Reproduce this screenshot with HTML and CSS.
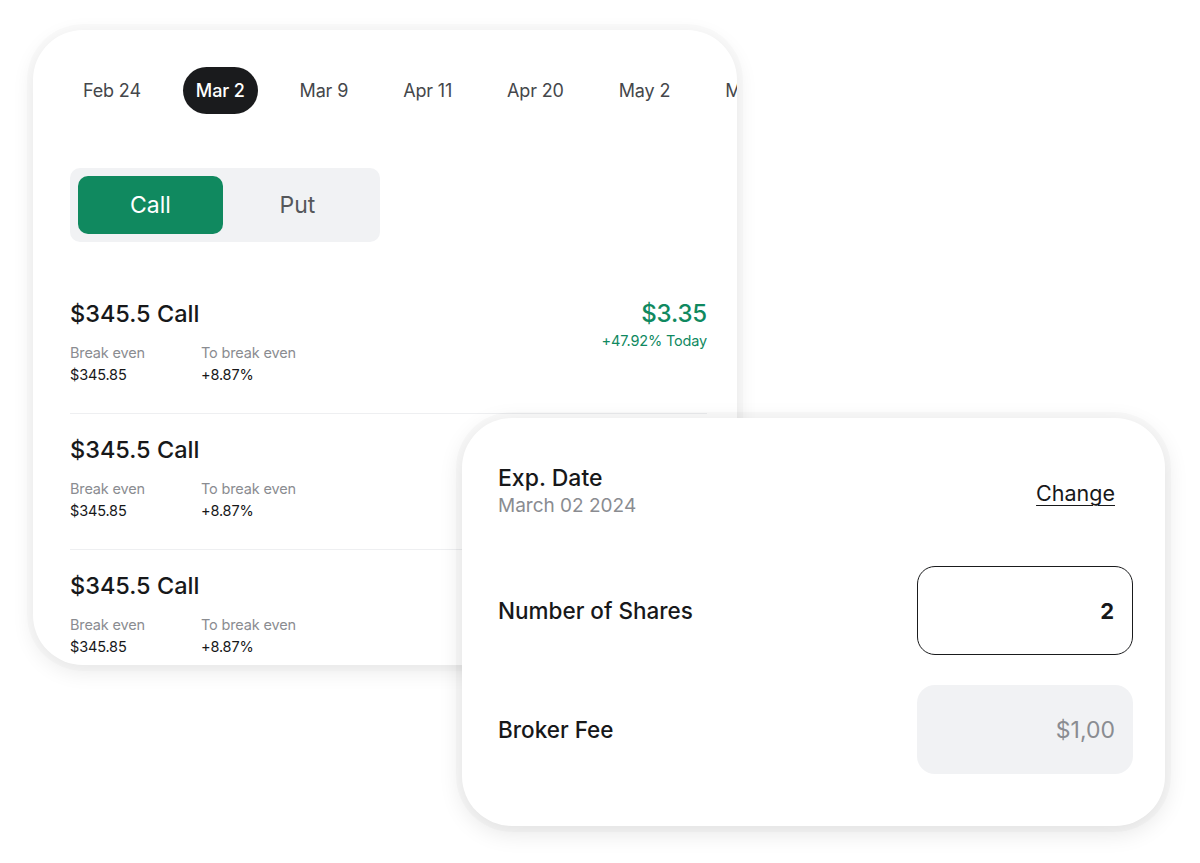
FILE: index.html
```html
<!DOCTYPE html>
<html lang="en">
<head>
  <meta charset="UTF-8" />
  <meta name="viewport" content="width=device-width, initial-scale=1.0" />
  <title>Options – Buy Call</title>
  <link rel="stylesheet" href="styles.css">
</head>
<body>

<main class="stage">

  <section class="card chain">
    <nav class="dates">
      <span class="date">Feb 24</span>
      <span class="date active">Mar 2</span>
      <span class="date">Mar 9</span>
      <span class="date">Apr 11</span>
      <span class="date">Apr 20</span>
      <span class="date">May 2</span>
      <span class="date">May 9</span>
    </nav>

    <div class="toggle">
      <button class="toggle-btn active">Call</button>
      <button class="toggle-btn">Put</button>
    </div>

    <div class="options">
      <div class="option">
        <div class="option-main">
          <h3>$345.5 Call</h3>
          <div class="stats">
            <div class="stat">
              <span class="stat-label">Break even</span>
              <span class="stat-value">$345.85</span>
            </div>
            <div class="stat">
              <span class="stat-label">To break even</span>
              <span class="stat-value">+8.87%</span>
            </div>
          </div>
        </div>
        <div class="option-price">
          <span class="price">$3.35</span>
          <span class="change">+47.92% Today</span>
        </div>
      </div>

      <div class="option">
        <div class="option-main">
          <h3>$345.5 Call</h3>
          <div class="stats">
            <div class="stat">
              <span class="stat-label">Break even</span>
              <span class="stat-value">$345.85</span>
            </div>
            <div class="stat">
              <span class="stat-label">To break even</span>
              <span class="stat-value">+8.87%</span>
            </div>
          </div>
        </div>
      </div>

      <div class="option">
        <div class="option-main">
          <h3>$345.5 Call</h3>
          <div class="stats">
            <div class="stat">
              <span class="stat-label">Break even</span>
              <span class="stat-value">$345.85</span>
            </div>
            <div class="stat">
              <span class="stat-label">To break even</span>
              <span class="stat-value">+8.87%</span>
            </div>
          </div>
        </div>
      </div>
    </div>
  </section>

  <section class="card order">
    <div class="order-head">
      <div>
        <h4>Exp. Date</h4>
        <p class="muted">March 02 2024</p>
      </div>
      <a href="#" class="link">Change</a>
    </div>

    <div class="order-row">
      <span class="order-label">Number of Shares</span>
      <div class="field">2</div>
    </div>

    <div class="order-row">
      <span class="order-label">Broker Fee</span>
      <div class="field readonly">$1,00</div>
    </div>
  </section>

</main>

</body>
</html>
```

FILE: styles.css
```css
:root {
  --bg: #ffffff;
  --card-bg: #ffffff;
  --accent: #10895f;
  --text-main: #17181a;
  --text-soft: #45474b;
  --text-muted: #8a8c91;
  --field-bg: #f1f2f4;
  --line: #eeeff1;
  --shadow: rgba(0, 0, 0, 0.09);
}

* {
  margin: 0;
  padding: 0;
  box-sizing: border-box;
}

body {
  font-family: Inter, 'Noto Sans', sans-serif;
  background: var(--bg);
  color: var(--text-main);
  letter-spacing: -0.01em;
}

a {
  color: inherit;
}

.stage {
  position: relative;
  width: 1200px;
  height: 863px;
  padding: 30px 0 0 33px;
}

.card {
  background: var(--card-bg);
  border-radius: 50px;
  box-shadow: 0 0 0 6px rgba(0, 0, 0, 0.015), 0 6px 22px var(--shadow);
  overflow: hidden;
}

/* option chain card */

.chain {
  width: 704px;
  height: 635px;
  padding: 37px 30px 0 37px;
}

.dates {
  display: flex;
  gap: 29px;
  white-space: nowrap;
}

.date {
  flex: none;
  height: 47px;
  padding: 0 13px;
  display: flex;
  align-items: center;
  font-size: 18px;
  color: var(--text-soft);
  border-radius: 24px;
}

.date.active {
  background: #1a1b1d;
  color: #fff;
  font-weight: 500;
}

.toggle {
  margin-top: 54px;
  width: 310px;
  padding: 8px;
  display: flex;
  background: var(--field-bg);
  border-radius: 10px;
}

.toggle-btn {
  flex: 1;
  height: 58px;
  border: none;
  background: transparent;
  font-family: inherit;
  font-size: 23px;
  color: #55575b;
  border-radius: 10px;
  cursor: pointer;
}

.toggle-btn.active {
  flex: none;
  width: 145px;
  background: var(--accent);
  color: #fff;
}

.options {
  margin-top: 36px;
}

.option {
  display: flex;
  justify-content: space-between;
  padding: 21px 0 27px;
  border-bottom: 1px solid var(--line);
}

.option h3 {
  font-size: 23.5px;
  font-weight: 500;
  line-height: 30px;
  letter-spacing: 0;
}

.stats {
  display: flex;
  margin-top: 13px;
}

.stat {
  width: 131px;
  display: flex;
  flex-direction: column;
  font-size: 14.5px;
  line-height: 22px;
}

.stat-label {
  color: var(--text-muted);
}

.stat-value {
  color: var(--text-main);
}

.option-price {
  display: flex;
  flex-direction: column;
  align-items: flex-end;
  color: var(--accent);
}

.price {
  font-size: 24px;
  font-weight: 500;
  line-height: 30px;
}

.change {
  font-size: 14.5px;
  line-height: 20px;
  margin-top: 2px;
}

/* order card, sits over the chain card */

.order {
  position: absolute;
  left: 462px;
  top: 418px;
  width: 703px;
  height: 408px;
  padding: 45px 32px 0 36px;
  letter-spacing: 0;
  box-shadow: 0 0 0 6px rgba(0, 0, 0, 0.02), 0 6px 24px rgba(0, 0, 0, 0.11);
}

.order-head {
  display: flex;
  justify-content: space-between;
  align-items: center;
}

.order-head h4 {
  font-size: 23px;
  font-weight: 500;
  line-height: 30px;
}

.muted {
  font-size: 19px;
  line-height: 26px;
  color: var(--text-muted);
}

.link {
  margin-right: 18px;
  margin-top: 4px;
  font-size: 21.5px;
  text-underline-offset: 4px;
  text-decoration-thickness: 1px;
}

.order-row {
  display: flex;
  justify-content: space-between;
  align-items: center;
  margin-top: 47px;
}

.order-row + .order-row {
  margin-top: 30px;
}

.order-label {
  font-size: 22.5px;
  font-weight: 500;
}

.field {
  width: 216px;
  height: 89px;
  padding: 0 18px;
  display: flex;
  align-items: center;
  justify-content: flex-end;
  font-size: 22px;
  font-weight: 700;
  border: 1.5px solid #1a1b1d;
  border-radius: 18px;
}

.field.readonly {
  border: none;
  background: var(--field-bg);
  color: var(--text-muted);
  font-weight: 400;
  font-size: 23px;
}
```
